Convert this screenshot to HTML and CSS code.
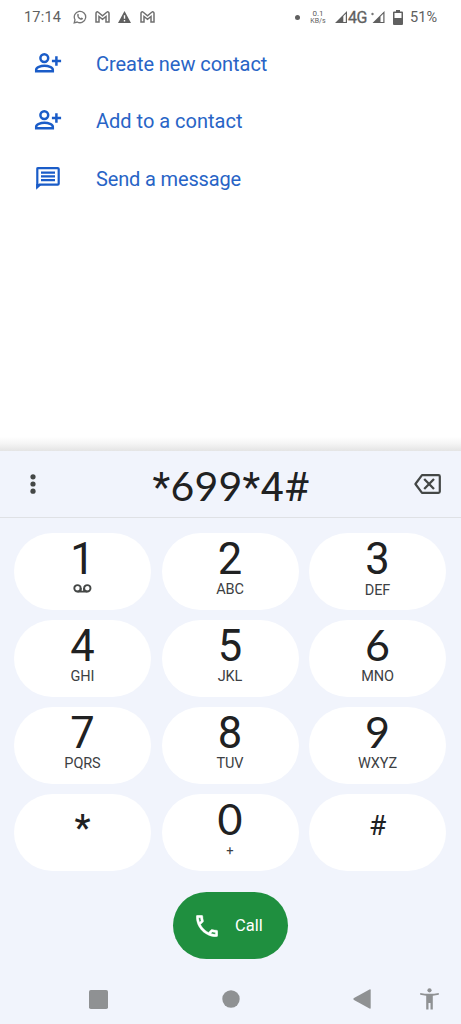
FILE: index.html
```html
<!DOCTYPE html>
<html lang="en">
<head>
<meta charset="utf-8">
<title>Phone</title>
<link rel="stylesheet" href="styles.css">
</head>
<body>
<div class="phone">
  <header class="status">
    <span class="clock">17:14</span>
    <svg class="st-icon" width="14" height="14" viewBox="0 0 14 14"><path d="M1.200 12.800l.8-3A5.700 5.700 0 1 1 4.200 12z" fill="none" stroke="#757575" stroke-width="1.300"/><path d="M4.300 4.200c.5-.8 1.100-.6 1.300 0l.4 1-.6.8c.5 1 1.200 1.700 2.300 2.200l.8-.7 1.500.7c.2.900-.8 1.700-1.700 1.600C6 9.500 3.700 6.900 4.300 4.200z" fill="#757575"/></svg>
    <svg class="st-icon gmail" width="15" height="12" viewBox="0 0 15 12"><path d="M1 11V2.200C1 .8 2.400.5 3.300 1.300l4.200 3.500 4.200-3.500c.9-.8 2.300-.5 2.300.9V11h-3V5.500L7.500 8.300 4 5.500V11z" fill="none" stroke="#707070" stroke-width="1.500"/></svg>
    <svg class="st-icon warn" width="13" height="12" viewBox="0 0 13 12"><path fill-rule="evenodd" d="M6.500 0L13 12H0zM5.800 4.200v3.600h1.400V4.200zm0 4.800v1.400h1.400V9z" fill="#606060"/></svg>
    <svg class="st-icon gmail" width="15" height="12" viewBox="0 0 15 12"><path d="M1 11V2.200C1 .8 2.400.5 3.300 1.300l4.200 3.500 4.200-3.500c.9-.8 2.300-.5 2.300.9V11h-3V5.500L7.500 8.300 4 5.500V11z" fill="none" stroke="#707070" stroke-width="1.500"/></svg>
    <span class="dot"></span>
    <span class="speed"><span>0.1</span><span class="unit">KB/s</span></span>
    <svg class="signal" width="12" height="12" viewBox="0 0 12 12"><path fill-rule="evenodd" d="M12 0v12H0zM10.800 2.800L8.300 5.300v5.600h2.500z" fill="#606060"/></svg>
    <span class="net">4G</span>
    <svg class="signal2" width="14" height="12" viewBox="0 0 14 12"><path fill-rule="evenodd" d="M13.500 0v12h-12zM12.300 2.800L9.500 5.600v5.300h2.800z" fill="#606060"/><circle cx="1.500" cy="3" r="1.200" fill="#777"/></svg>
    <svg class="battery" width="10" height="15" viewBox="0 0 10 15"><path fill-rule="evenodd" d="M3 0h4v1.500h2q1 0 1 1v11.500q0 1-1 1H1q-1 0-1-1V2.500q0-1 1-1h2zM1.500 3v5h7V3z" fill="#606060"/></svg>
    <span class="percent">51%</span>
  </header>

  <main class="actions">
    <div class="action">
      <svg width="28" height="24" viewBox="0 0 28 24"><g fill="none" stroke="#1a5cc8" stroke-width="2.500"><circle cx="10.300" cy="6.100" r="3.900"/><path d="M2.200 19.300v-1.500c0-2.600 4.500-4 8.300-4s8.300 1.400 8.300 4v1.500z"/><path d="M22.400 4.300v9.400M17.900 9h9.200"/></g></svg>
      <span class="create">Create new contact</span>
    </div>
    <div class="action">
      <svg width="28" height="24" viewBox="0 0 28 24"><g fill="none" stroke="#1a5cc8" stroke-width="2.500"><circle cx="10.300" cy="6.100" r="3.900"/><path d="M2.200 19.300v-1.500c0-2.600 4.500-4 8.300-4s8.300 1.400 8.300 4v1.500z"/><path d="M22.400 4.300v9.400M17.900 9h9.200"/></g></svg>
      <span class="add">Add to a contact</span>
    </div>
    <div class="action">
      <svg width="28" height="24" viewBox="0 0 28 24"><path d="M3.300 19.500V1.700q0-.6.800-.6h19.600q1 0 1 1v14.600q0 1-1 1H5.500z" fill="none" stroke="#1a5cc8" stroke-width="2.200"/><path d="M2.200 22.800V17h6z" fill="#1a5cc8"/><path d="M7 5.700h14M7 9.400h14M7 13.100h14" stroke="#1a5cc8" stroke-width="2.200"/></svg>
      <span class="send">Send a message</span>
    </div>
  </main>

  <section class="dialer">
    <div class="entry">
      <svg class="more" width="6" height="20" viewBox="0 0 6 20"><g fill="#444746"><circle cx="3" cy="2.800" r="2.600"/><circle cx="3" cy="10" r="2.600"/><circle cx="3" cy="17.200" r="2.600"/></g></svg>
      <span class="number">*<span class="round">699</span>*4#</span>
      <svg class="erase" width="27" height="20" viewBox="0 0 27 20"><path d="M8 1.200h16.500q1.300 0 1.300 1.300v15q0 1.300-1.300 1.300H8L1.400 10z" fill="none" stroke="#444746" stroke-width="2.200" stroke-linejoin="round"/><path d="M10.200 5l9.800 10M20 5l-9.800 10" stroke="#444746" stroke-width="2.300"/></svg>
    </div>
    <div class="keys">
      <div class="key"><span class="digit">1</span><svg class="voicemail" width="19" height="10" viewBox="0 0 19 10"><g fill="none" stroke="#444746" stroke-width="1.900"><circle cx="4.500" cy="4.300" r="3.200"/><circle cx="14.300" cy="4.300" r="3.200"/><path d="M4.500 7.600h9.800M7.700 4v4M11.100 4v4"/></g></svg></div>
      <div class="key"><span class="digit">2</span><span class="letters">ABC</span></div>
      <div class="key"><span class="digit">3</span><span class="letters low">DEF</span></div>
      <div class="key"><span class="digit">4</span><span class="letters">GHI</span></div>
      <div class="key"><span class="digit">5</span><span class="letters">JKL</span></div>
      <div class="key"><span class="digit round">6</span><span class="letters">MNO</span></div>
      <div class="key"><span class="digit">7</span><span class="letters">PQRS</span></div>
      <div class="key"><span class="digit">8</span><span class="letters">TUV</span></div>
      <div class="key"><span class="digit round">9</span><span class="letters">WXYZ</span></div>
      <div class="key"><span class="star">*</span></div>
      <div class="key"><span class="digit round">0</span><span class="letters plus">+</span></div>
      <div class="key"><span class="hash">#</span></div>
    </div>
    <div class="call">
      <svg width="22" height="22" viewBox="2.800 2.800 18.400 18.400"><path d="M6.540 5c.06.89.21 1.760.45 2.590l-1.200 1.200c-.41-1.200-.67-2.470-.76-3.790h1.510m9.860 12.020c.85.24 1.720.39 2.600.45v1.490c-1.320-.09-2.590-.35-3.800-.75l1.200-1.190M7.500 3H4c-.55 0-1 .45-1 1 0 9.390 7.610 17 17 17 .55 0 1-.45 1-1v-3.490c0-.55-.45-1-1-1-1.240 0-2.450-.2-3.570-.57-.1-.04-.21-.05-.31-.05-.26 0-.51.1-.71.29l-2.200 2.200c-2.830-1.450-5.150-3.760-6.590-6.590l2.200-2.200c.28-.28.36-.67.25-1.020C8.700 6.450 8.500 5.250 8.500 4c0-.55-.45-1-1-1z" fill="#fff" stroke="#fff" stroke-width=".3"/></svg>
      <span>Call</span>
    </div>
    <nav class="nav">
      <svg class="recent" width="19" height="19" viewBox="0 0 19 19"><rect width="19" height="19" rx="1.800" fill="#8f9193"/></svg>
      <svg class="home" width="18" height="18" viewBox="0 0 18 18"><circle cx="9" cy="9" r="8.700" fill="#8f9193"/></svg>
      <svg class="back" width="18" height="20" viewBox="0 0 18 20"><path d="M16.500.5Q17.700 0 17.700 1.200v17.600q0 1.200-1.200.7L1 10.900q-1.300-.9 0-1.800z" fill="#8f9193"/></svg>
      <svg class="access" width="19" height="22" viewBox="0 0 19 22"><circle cx="9.500" cy="2.300" r="2.100" fill="#8f9193"/><path d="M.2 4.900Q9.500 6.700 18.800 4.900v1.900l-6 .9V21.500h-2.300V15H8.500v6.500H6.200V7.700l-6-.9z" fill="#8f9193"/></svg>
    </nav>
  </section>
</div>
</body>
</html>
```

FILE: styles.css
```css
* { box-sizing: border-box; }
body { margin: 0; background: #fff; font-family: Roboto, "Liberation Sans", sans-serif; }
svg { display: block; flex: none; }
.phone { width: 461px; height: 1024px; display: flex; flex-direction: column; overflow: hidden; }

.status { height: 34px; padding-left: 24px; display: flex; align-items: center; color: #606060; white-space: nowrap; }
.clock { width: 49px; font-size: 14.500px; letter-spacing: .2px; }
.gmail { margin-left: 8px; }
.warn { margin-left: 8px; }
.warn + .gmail { margin-left: 9px; }
.dot { width: 5px; height: 5px; margin-left: 140px; border-radius: 50%; background: #606060; }
.speed { width: 16px; margin-left: 10px; display: flex; flex-direction: column; align-items: center; font-size: 8px; line-height: 8px; }
.unit { font-size: 7px; line-height: 7px; }
.signal { margin-left: 9px; }
.net { width: 20px; margin-left: 1px; font-size: 16px; letter-spacing: -.6px; -webkit-text-stroke: .3px #606060; }
.signal2 { margin-left: 3px; }
.battery { margin-left: 8px; }
.percent { margin-left: 7px; font-size: 14.500px; letter-spacing: .1px; }

.actions { height: 417px; padding-top: 1px; background: linear-gradient(#fff 0, #fff 403px, #f4f4f4 410px, #e4e4e4 417px); display: flex; flex-direction: column; }
.action { height: 57.500px; padding-left: 34px; display: flex; align-items: center; gap: 34px; font-size: 20px; color: #2864c6; }
.create { letter-spacing: -.05px; }
.add { letter-spacing: 0; }
.send { letter-spacing: -.15px; }

.dialer { height: 573px; background: #f1f4fc; }
.entry { height: 67px; padding: 0 20px 0 30px; display: flex; align-items: center; border-bottom: 1px solid #dfe1e5; }
.number { margin: 4px 0 0 116.500px; font-size: 41px; line-height: 54px; letter-spacing: .25px; color: #202122; }
.erase { margin-left: auto; }
.round { font-family: Lato, sans-serif; }
.keys { padding: 15px 15px 0 14px; display: grid; grid-template-columns: repeat(3, 137px); justify-content: space-between; grid-auto-rows: 77px; row-gap: 10px; }
.key { border-radius: 38.500px; background: #fff; display: flex; flex-direction: column; align-items: center; color: #202122; }
.digit { flex: none; font-size: 43.500px; line-height: 53px; height: 48px; }
.digit.round { font-size: 43px; line-height: 50px; }
.letters { font-size: 14.500px; line-height: 18px; color: #3c4043; letter-spacing: -.1px; }
.low { padding-top: 1px; }
.voicemail { margin-top: 3px; }
.star { font-weight: 500; font-size: 36px; line-height: 68px; }
.hash { font-size: 28px; line-height: 63px; }
.plus { font-size: 13px; }
.call { width: 115px; height: 67px; margin: 21px 0 0 173px; padding-left: 23px; border-radius: 34px; background: #1f8f3f; color: #fff; display: flex; align-items: center; gap: 17px; font-size: 16.500px; }
.nav { height: 65px; display: flex; align-items: center; padding: 15px 0 0 89px; }
.home { margin-left: 114px; }
.back { margin-left: 113px; }
.access { margin-left: 49px; }
```
